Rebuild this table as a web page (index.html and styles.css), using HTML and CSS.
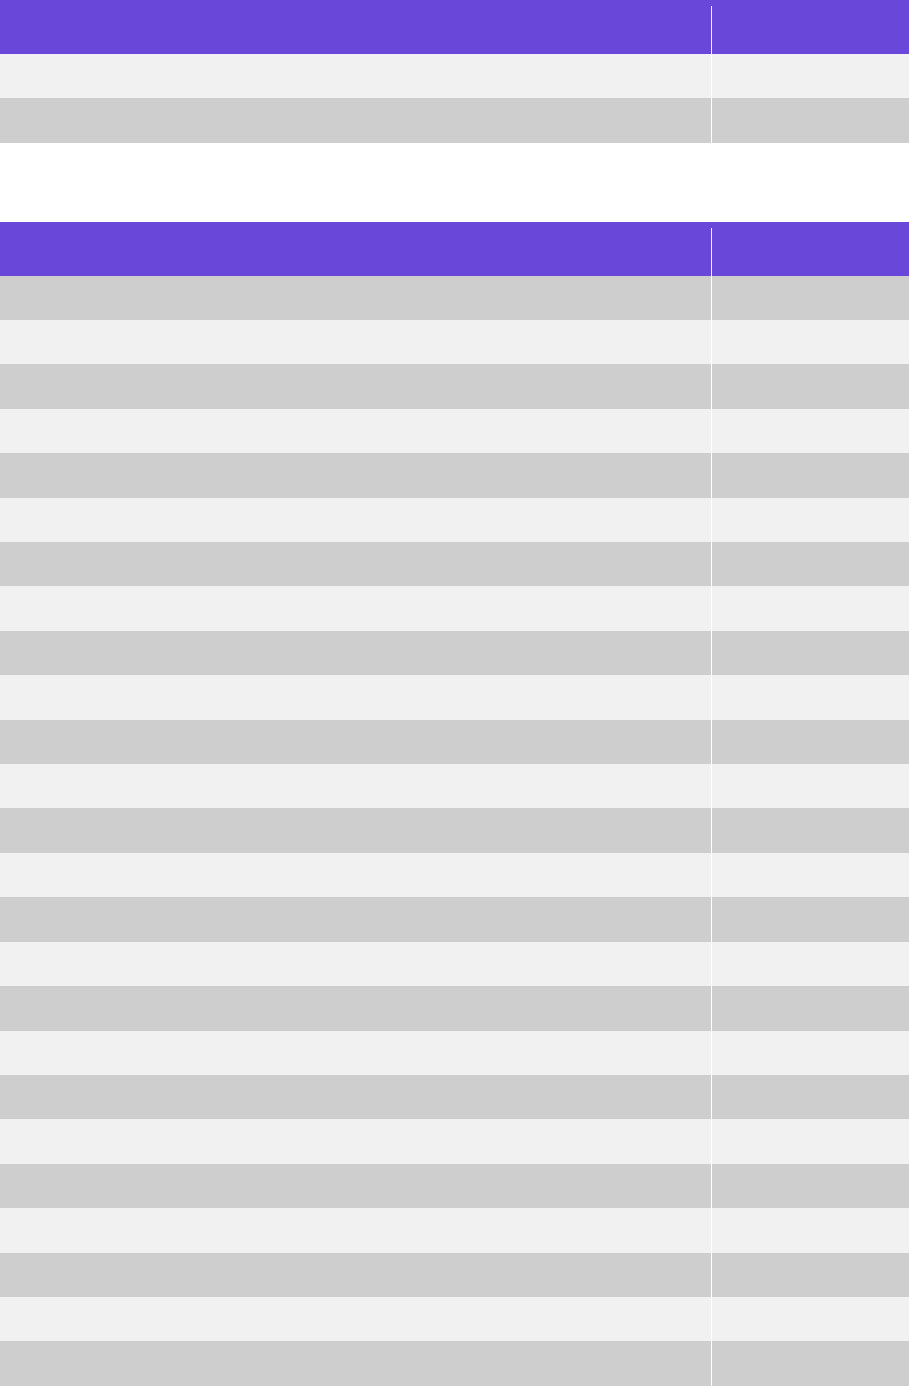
FILE: index.html
```html
<!DOCTYPE html>
<html lang="en">
<head>
<meta charset="utf-8">
<title>Tables</title>
<link rel="stylesheet" href="styles.css">
</head>
<body>
<div class="table first">
  <div class="row head"><div class="cell main"></div><div class="cell side"></div></div>
  <div class="row light"><div class="cell main"></div><div class="cell side"></div></div>
  <div class="row dark"><div class="cell main"></div><div class="cell side"></div></div>
</div>
<div class="table second">
  <div class="row head"><div class="cell main"></div><div class="cell side"></div></div>
  <div class="row dark"><div class="cell main"></div><div class="cell side"></div></div>
  <div class="row light"><div class="cell main"></div><div class="cell side"></div></div>
  <div class="row dark"><div class="cell main"></div><div class="cell side"></div></div>
  <div class="row light"><div class="cell main"></div><div class="cell side"></div></div>
  <div class="row dark"><div class="cell main"></div><div class="cell side"></div></div>
  <div class="row light"><div class="cell main"></div><div class="cell side"></div></div>
  <div class="row dark"><div class="cell main"></div><div class="cell side"></div></div>
  <div class="row light"><div class="cell main"></div><div class="cell side"></div></div>
  <div class="row dark"><div class="cell main"></div><div class="cell side"></div></div>
  <div class="row light"><div class="cell main"></div><div class="cell side"></div></div>
  <div class="row dark"><div class="cell main"></div><div class="cell side"></div></div>
  <div class="row light"><div class="cell main"></div><div class="cell side"></div></div>
  <div class="row dark"><div class="cell main"></div><div class="cell side"></div></div>
  <div class="row light"><div class="cell main"></div><div class="cell side"></div></div>
  <div class="row dark"><div class="cell main"></div><div class="cell side"></div></div>
  <div class="row light"><div class="cell main"></div><div class="cell side"></div></div>
  <div class="row dark"><div class="cell main"></div><div class="cell side"></div></div>
  <div class="row light"><div class="cell main"></div><div class="cell side"></div></div>
  <div class="row dark"><div class="cell main"></div><div class="cell side"></div></div>
  <div class="row light"><div class="cell main"></div><div class="cell side"></div></div>
  <div class="row dark"><div class="cell main"></div><div class="cell side"></div></div>
  <div class="row light"><div class="cell main"></div><div class="cell side"></div></div>
  <div class="row dark"><div class="cell main"></div><div class="cell side"></div></div>
  <div class="row light"><div class="cell main"></div><div class="cell side"></div></div>
  <div class="row dark"><div class="cell main"></div><div class="cell side"></div></div>
</div>
</body>
</html>
```
FILE: styles.css
```css
html, body {
  margin: 0;
  padding: 0;
  background: #ffffff;
  font-family: "Liberation Sans", Arial, sans-serif;
}

.table {
  display: flex;
  flex-direction: column;
  width: 100%;
}

.second {
  margin-top: 78.796875px;
}

.row {
  display: grid;
  grid-template-columns: 711px 1fr;
  height: 44.40625px;
}

.row.head {
  height: 54px;
  padding-top: 6px;
  box-sizing: border-box;
  background: #6947d8;
}

.row.light {
  background: #f1f1f1;
}

.row.dark {
  background: #cecece;
}

.cell.side {
  border-left: 1px solid #ffffff;
}
```
